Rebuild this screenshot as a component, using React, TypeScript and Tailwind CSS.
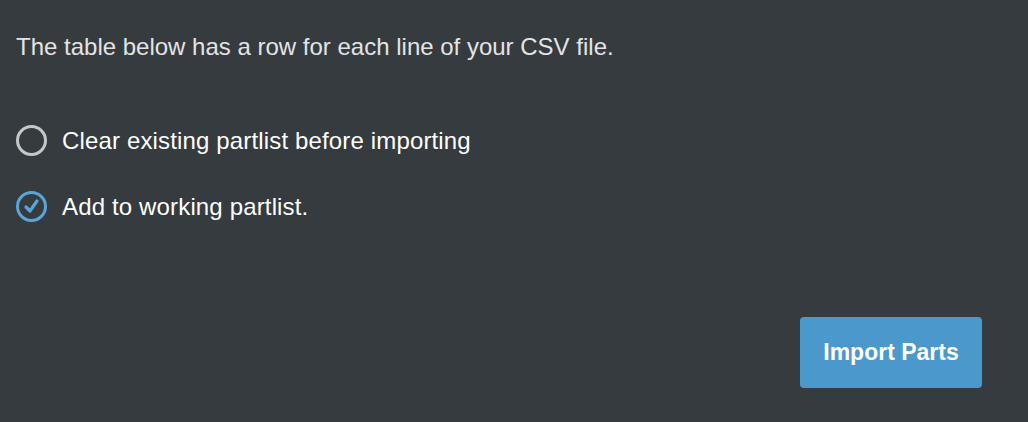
export default function App() {
  return (
    <div className="w-[1028px] h-[422px] bg-[#353b3e] flex flex-col px-4 pt-[33px] font-['Liberation_Sans',Arial,sans-serif]">
      <p className="text-[24px] leading-[28px] text-[#e2e4e5]">The table below has a row for each line of your CSV file.</p>
      <div className="mt-[64px] flex flex-col gap-[35px]">
        <div className="flex items-center gap-[15px]">
          <span className="w-[31px] h-[31px] rounded-full border-[3px] border-[#c4c8ca] box-border" />
          <span className="text-[24px] leading-[30px] tracking-[0.15px] text-white">Clear existing partlist before importing</span>
        </div>
        <div className="flex items-center gap-[15px]">
          <span className="w-[31px] h-[31px] rounded-full border-[3px] border-[#5ba4d4] box-border flex items-center justify-center">
            <svg width="19" height="19" viewBox="0 0 19 19" fill="none">
              <path d="M4 10 L8 14 L15 4" stroke="#5ba4d4" strokeWidth="3.2" strokeLinecap="round" strokeLinejoin="round" />
            </svg>
          </span>
          <span className="text-[24px] leading-[30px] tracking-[0.15px] text-white">Add to working partlist.</span>
        </div>
      </div>
      <div className="flex justify-end mt-[95px] pr-[30px]">
        <button className="w-[182px] h-[71px] rounded-[4px] bg-[#4a98cc] text-white font-bold text-[23px]">Import Parts</button>
      </div>
    </div>
  );
}
